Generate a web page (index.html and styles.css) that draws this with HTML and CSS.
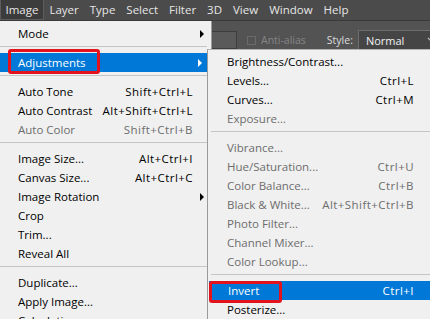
FILE: index.html
```html
<!DOCTYPE html>
<html>
<head>
<meta charset="utf-8">
<link rel="stylesheet" href="styles.css">
</head>
<body>
<div class="app">
  <div class="menubar">
    <span class="mb-item active">Image</span>
    <span class="mb-item">Layer</span>
    <span class="mb-item">Type</span>
    <span class="mb-item">Select</span>
    <span class="mb-item">Filter</span>
    <span class="mb-item">3D</span>
    <span class="mb-item">View</span>
    <span class="mb-item">Window</span>
    <span class="mb-item">Help</span>
  </div>
  <div class="options">
    <div class="field"></div>
    <span class="check"></span>
    <span class="aa">Anti-alias</span>
    <span class="style-label">Style:</span>
    <div class="select">
      <span>Normal</span>
      <svg class="chev" width="9" height="6" viewBox="0 0 9 6"><path d="M1 1 L4.5 4.5 L8 1" fill="none" stroke="#bdbdbd" stroke-width="1.2"/></svg>
    </div>
  </div>
</div>

<div class="menu main">
  <div class="item"><span class="label">Mode</span><span class="arrow"><i class="tri"></i></span></div>
  <div class="sep"></div>
  <div class="item hl"><span class="label">Adjustments</span><span class="arrow"><i class="tri white"></i></span></div>
  <div class="sep"></div>
  <div class="item"><span class="label">Auto Tone</span><span class="sc">Shift+Ctrl+L</span><span class="arrow"></span></div>
  <div class="item"><span class="label">Auto Contrast</span><span class="sc">Alt+Shift+Ctrl+L</span><span class="arrow"></span></div>
  <div class="item dis"><span class="label">Auto Color</span><span class="sc">Shift+Ctrl+B</span><span class="arrow"></span></div>
  <div class="sep"></div>
  <div class="item"><span class="label">Image Size...</span><span class="sc">Alt+Ctrl+I</span><span class="arrow"></span></div>
  <div class="item"><span class="label">Canvas Size...</span><span class="sc">Alt+Ctrl+C</span><span class="arrow"></span></div>
  <div class="item"><span class="label">Image Rotation</span><span class="arrow"><i class="tri"></i></span></div>
  <div class="item"><span class="label">Crop</span><span class="arrow"></span></div>
  <div class="item"><span class="label">Trim...</span><span class="arrow"></span></div>
  <div class="item"><span class="label">Reveal All</span><span class="arrow"></span></div>
  <div class="sep"></div>
  <div class="item"><span class="label">Duplicate...</span><span class="arrow"></span></div>
  <div class="item"><span class="label">Apply Image...</span><span class="arrow"></span></div>
  <div class="item"><span class="label">Calculations...</span><span class="arrow"></span></div>
</div>

<div class="menu sub">
  <div class="item"><span class="label">Brightness/Contrast...</span></div>
  <div class="item"><span class="label">Levels...</span><span class="sc">Ctrl+L</span></div>
  <div class="item"><span class="label">Curves...</span><span class="sc">Ctrl+M</span></div>
  <div class="item dis"><span class="label">Exposure...</span></div>
  <div class="sep"></div>
  <div class="item dis"><span class="label">Vibrance...</span></div>
  <div class="item dis"><span class="label">Hue/Saturation...</span><span class="sc">Ctrl+U</span></div>
  <div class="item dis"><span class="label">Color Balance...</span><span class="sc">Ctrl+B</span></div>
  <div class="item dis"><span class="label">Black &amp; White...</span><span class="sc">Alt+Shift+Ctrl+B</span></div>
  <div class="item dis"><span class="label">Photo Filter...</span></div>
  <div class="item dis"><span class="label">Channel Mixer...</span></div>
  <div class="item dis"><span class="label">Color Lookup...</span></div>
  <div class="sep"></div>
  <div class="item hl"><span class="label">Invert</span><span class="sc">Ctrl+I</span></div>
  <div class="item"><span class="label">Posterize...</span></div>
</div>

<div class="callout c1"></div>
<div class="callout c2"></div>
</body>
</html>
```

FILE: styles.css
```css
html, body {
  margin: 0;
  padding: 0;
}
body {
  width: 430px;
  height: 319px;
  overflow: hidden;
  background: #535353;
  font-family: "Open Sans", "Noto Sans", sans-serif;
  font-size: 11.5px;
  position: relative;
}
.app {
  width: 430px;
  overflow: hidden;
}
.menubar {
  height: 21px;
  background: #4b4b4b;
  display: flex;
  align-items: stretch;
  color: #e6e6e6;
  border-bottom: 1px solid #3a3a3a;
  box-sizing: border-box;
}
.mb-item {
  display: flex;
  align-items: center;
  padding: 0 5.5px;
  line-height: 1;
}
.mb-item.active {
  background: #3c3c3c;
  border: 1px solid #5c5c5c;
  border-top: none;
  padding: 0 4.5px;
}
.options {
  height: 40px;
  width: 430px;
  overflow: hidden;
  background: #535353;
  display: flex;
  align-items: center;
  white-space: nowrap;
  font-size: 10.5px;
}
.options > * {
  flex-shrink: 0;
}
.field {
  width: 37px;
  height: 18px;
  margin-left: 200px;
  margin-top: -2px;
  background: #5a5a5a;
  border: 1px solid #3d3d3d;
  box-sizing: border-box;
}
.check {
  width: 9px;
  height: 9px;
  margin-left: 10px;
  margin-top: -2px;
  border: 1px solid #6a6a6a;
  box-sizing: border-box;
}
.aa {
  color: #858585;
  margin-left: 5px;
  margin-top: -2px;
}
.style-label {
  color: #dcdcdc;
  margin-left: 21px;
  margin-top: -2px;
}
.select {
  margin-left: 5px;
  margin-top: -2px;
  width: 90px;
  height: 20px;
  background: #454545;
  border: 1px solid #6e6e6e;
  box-sizing: border-box;
  display: flex;
  align-items: center;
  padding-left: 7px;
  color: #f2f2f2;
  font-size: 11px;
}
.chev {
  margin-left: 23px;
}

.menu {
  position: absolute;
  background: #f0f0f0;
  color: #000;
  box-sizing: border-box;
}
.main {
  left: 0;
  top: 21px;
  width: 212px;
  padding-top: 3px;
  border-right: 1px solid #9a9a9a;
  height: 298px;
  overflow: hidden;
}
.sub {
  left: 207px;
  top: 49px;
  width: 223px;
  height: 270px;
  overflow: hidden;
  border-left: 1px solid #9a9a9a;
  border-top: 1px solid #b4b4b4;
  padding-top: 2px;
}
.item {
  height: 19px;
  display: flex;
  align-items: center;
  white-space: nowrap;
}
.main .item {
  padding-left: 18px;
}
.sub .item {
  padding-left: 19px;
  padding-right: 16px;
}
.label {
  flex: 1;
}
.sc {
  letter-spacing: 0.45px;
}
.arrow {
  width: 18px;
  height: 19px;
  display: flex;
  align-items: center;
  padding-left: 7px;
  box-sizing: border-box;
  flex-shrink: 0;
}
.tri {
  display: block;
  width: 0;
  height: 0;
  border-top: 4px solid transparent;
  border-bottom: 4px solid transparent;
  border-left: 4px solid #000;
}
.tri.white {
  border-left-color: #fff;
}
.dis {
  color: #6d6d6d;
}
.hl {
  background: #0078d7;
  color: #fff;
}
.main .hl {
  margin-right: 2px;
}
.sep {
  height: 1px;
  background: #c5c5c5;
}
.main .sep {
  margin: 3px 4px 6px 0;
}
.sub .sep {
  margin: 3px 0 6px 3px;
}
.sub .hl {
  margin-left: 1px;
}

.callout {
  position: absolute;
  border: 3px solid #e2131d;
  border-radius: 3px;
  box-sizing: border-box;
}
.c1 {
  left: 8px;
  top: 49px;
  width: 92px;
  height: 25px;
}
.c2 {
  left: 209px;
  top: 281px;
  width: 73px;
  height: 22px;
}
```
